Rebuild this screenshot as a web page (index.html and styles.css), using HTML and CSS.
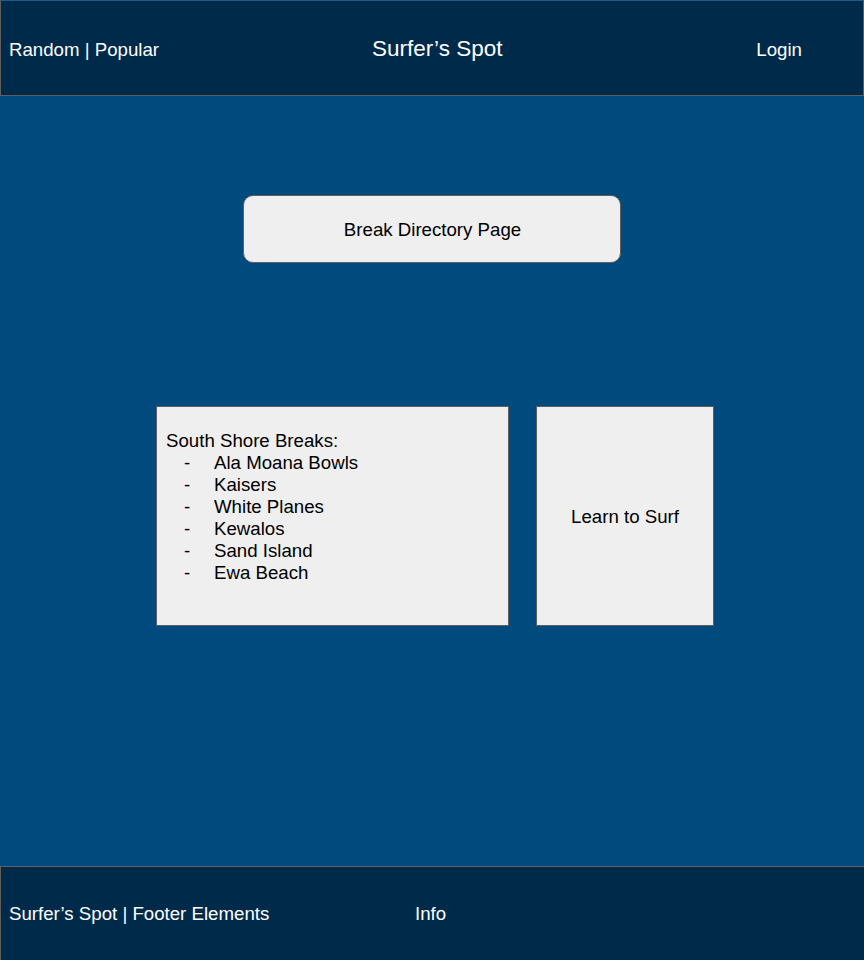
FILE: index.html
```html
<!DOCTYPE html>
<html>
<head>
<meta charset="utf-8">
<link rel="stylesheet" href="styles.css">
</head>
<body>
<header class="topbar">
  <div class="nav-left">Random | Popular</div>
  <div class="title">Surfer’s Spot</div>
  <div class="nav-right">Login</div>
</header>
<main class="main">
  <div class="directory">Break Directory Page</div>
  <div class="cards">
    <div class="card list-card">
      <div class="list-title">South Shore Breaks:</div>
      <ul class="breaks">
        <li>Ala Moana Bowls</li>
        <li>Kaisers</li>
        <li>White Planes</li>
        <li>Kewalos</li>
        <li>Sand Island</li>
        <li>Ewa Beach</li>
      </ul>
    </div>
    <div class="card learn-card">Learn to Surf</div>
  </div>
</main>
<footer class="footer">
  <div class="foot-left">Surfer’s Spot | Footer Elements</div>
  <div class="foot-info">Info</div>
</footer>
</body>
</html>
```
FILE: styles.css
```css
* { box-sizing: border-box; }
html, body { margin: 0; padding: 0; }
body {
  width: 864px;
  height: 960px;
  overflow: hidden;
  font-family: "Liberation Sans", Arial, sans-serif;
  font-size: 18.67px;
  background: #004a7e;
}
.topbar {
  height: 96px;
  background: #002a4a;
  border: 1px solid #5f5f5f;
  border-top: 1px solid #1d5a8a;
  display: flex;
  align-items: center;
  color: #ffffff;
}
.nav-left {
  width: 371px;
  padding-left: 8px;
  padding-top: 4px;
}
.title {
  font-size: 22.5px;
  padding-top: 2px;
}
.nav-right {
  margin-left: auto;
  margin-right: 61px;
  padding-top: 4px;
}
.main {
  height: 770px;
  display: flex;
  flex-direction: column;
  align-items: flex-start;
}
.directory {
  margin-top: 99px;
  margin-left: 243px;
  width: 378px;
  height: 68px;
  background: #efefef;
  border: 1px solid #5f5f5f;
  border-radius: 10px;
  color: #000;
  display: flex;
  align-items: center;
  justify-content: center;
  padding-left: 1px;
  padding-top: 1px;
}
.cards {
  margin-top: 143px;
  margin-left: 156px;
  display: flex;
  gap: 27px;
}
.card {
  background: #efefef;
  border: 1px solid #5f5f5f;
  height: 220px;
  color: #000;
}
.list-card {
  width: 353px;
  padding: 23px 0 0 9px;
  line-height: 22px;
}
.breaks {
  list-style: none;
  margin: 0;
  padding: 0;
}
.breaks li {
  position: relative;
  padding-left: 48px;
}
.breaks li::before {
  content: "-";
  position: absolute;
  left: 18px;
}
.learn-card {
  width: 178px;
  display: flex;
  align-items: center;
  justify-content: center;
  padding-top: 1px;
}
.footer {
  height: 94px;
  background: #002a4a;
  border-top: 1px solid #5f5f5f;
  border-left: 1px solid #5f5f5f;
  display: flex;
  align-items: center;
  color: #fff;
}
.foot-left {
  width: 414px;
  padding-left: 8px;
  padding-top: 1px;
}
.foot-info {
  padding-top: 1px;
}
```
